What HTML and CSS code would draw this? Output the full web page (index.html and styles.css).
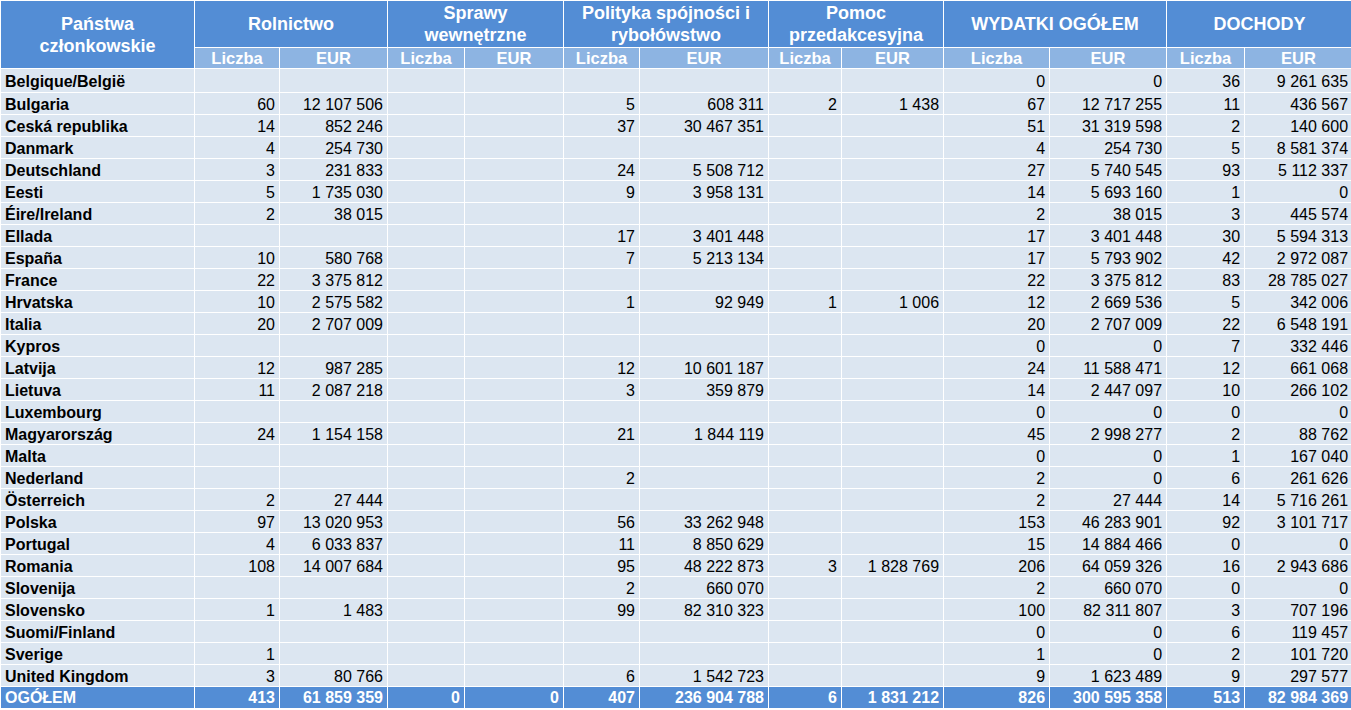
FILE: index.html
```html
<!DOCTYPE html>
<html lang="pl">
<head>
<meta charset="utf-8">
<title>Państwa członkowskie</title>
<link rel="stylesheet" href="styles.css">
</head>
<body>
<table class="grid">
<colgroup>
<col class="c-name"><col class="c1"><col class="c2"><col class="c3"><col class="c4"><col class="c5"><col class="c6"><col class="c7"><col class="c8"><col class="c9"><col class="c10"><col class="c11"><col class="c12">
</colgroup>
<thead>
<tr class="h1">
<th rowspan="2" class="hname">Państwa<br>członkowskie</th>
<th colspan="2">Rolnictwo</th>
<th colspan="2">Sprawy<br>wewnętrzne</th>
<th colspan="2">Polityka spójności i<br>rybołówstwo</th>
<th colspan="2">Pomoc<br>przedakcesyjna</th>
<th colspan="2">WYDATKI OGÓŁEM</th>
<th colspan="2">DOCHODY</th>
</tr>
<tr class="h2">
<th>Liczba</th><th>EUR</th><th>Liczba</th><th>EUR</th><th>Liczba</th><th>EUR</th><th>Liczba</th><th>EUR</th><th>Liczba</th><th>EUR</th><th>Liczba</th><th>EUR</th>
</tr>
</thead>
<tbody>
<tr class="first"><td>Belgique/België</td><td></td><td></td><td></td><td></td><td></td><td></td><td></td><td></td><td>0</td><td>0</td><td>36</td><td>9 261 635</td></tr>
<tr><td>Bulgaria</td><td>60</td><td>12 107 506</td><td></td><td></td><td>5</td><td>608 311</td><td>2</td><td>1 438</td><td>67</td><td>12 717 255</td><td>11</td><td>436 567</td></tr>
<tr><td>Ceská republika</td><td>14</td><td>852 246</td><td></td><td></td><td>37</td><td>30 467 351</td><td></td><td></td><td>51</td><td>31 319 598</td><td>2</td><td>140 600</td></tr>
<tr><td>Danmark</td><td>4</td><td>254 730</td><td></td><td></td><td></td><td></td><td></td><td></td><td>4</td><td>254 730</td><td>5</td><td>8 581 374</td></tr>
<tr><td>Deutschland</td><td>3</td><td>231 833</td><td></td><td></td><td>24</td><td>5 508 712</td><td></td><td></td><td>27</td><td>5 740 545</td><td>93</td><td>5 112 337</td></tr>
<tr><td>Eesti</td><td>5</td><td>1 735 030</td><td></td><td></td><td>9</td><td>3 958 131</td><td></td><td></td><td>14</td><td>5 693 160</td><td>1</td><td>0</td></tr>
<tr><td>Éire/Ireland</td><td>2</td><td>38 015</td><td></td><td></td><td></td><td></td><td></td><td></td><td>2</td><td>38 015</td><td>3</td><td>445 574</td></tr>
<tr><td>Ellada</td><td></td><td></td><td></td><td></td><td>17</td><td>3 401 448</td><td></td><td></td><td>17</td><td>3 401 448</td><td>30</td><td>5 594 313</td></tr>
<tr><td>España</td><td>10</td><td>580 768</td><td></td><td></td><td>7</td><td>5 213 134</td><td></td><td></td><td>17</td><td>5 793 902</td><td>42</td><td>2 972 087</td></tr>
<tr><td>France</td><td>22</td><td>3 375 812</td><td></td><td></td><td></td><td></td><td></td><td></td><td>22</td><td>3 375 812</td><td>83</td><td>28 785 027</td></tr>
<tr><td>Hrvatska</td><td>10</td><td>2 575 582</td><td></td><td></td><td>1</td><td>92 949</td><td>1</td><td>1 006</td><td>12</td><td>2 669 536</td><td>5</td><td>342 006</td></tr>
<tr><td>Italia</td><td>20</td><td>2 707 009</td><td></td><td></td><td></td><td></td><td></td><td></td><td>20</td><td>2 707 009</td><td>22</td><td>6 548 191</td></tr>
<tr><td>Kypros</td><td></td><td></td><td></td><td></td><td></td><td></td><td></td><td></td><td>0</td><td>0</td><td>7</td><td>332 446</td></tr>
<tr><td>Latvija</td><td>12</td><td>987 285</td><td></td><td></td><td>12</td><td>10 601 187</td><td></td><td></td><td>24</td><td>11 588 471</td><td>12</td><td>661 068</td></tr>
<tr><td>Lietuva</td><td>11</td><td>2 087 218</td><td></td><td></td><td>3</td><td>359 879</td><td></td><td></td><td>14</td><td>2 447 097</td><td>10</td><td>266 102</td></tr>
<tr><td>Luxembourg</td><td></td><td></td><td></td><td></td><td></td><td></td><td></td><td></td><td>0</td><td>0</td><td>0</td><td>0</td></tr>
<tr><td>Magyarország</td><td>24</td><td>1 154 158</td><td></td><td></td><td>21</td><td>1 844 119</td><td></td><td></td><td>45</td><td>2 998 277</td><td>2</td><td>88 762</td></tr>
<tr><td>Malta</td><td></td><td></td><td></td><td></td><td></td><td></td><td></td><td></td><td>0</td><td>0</td><td>1</td><td>167 040</td></tr>
<tr><td>Nederland</td><td></td><td></td><td></td><td></td><td>2</td><td></td><td></td><td></td><td>2</td><td>0</td><td>6</td><td>261 626</td></tr>
<tr><td>Österreich</td><td>2</td><td>27 444</td><td></td><td></td><td></td><td></td><td></td><td></td><td>2</td><td>27 444</td><td>14</td><td>5 716 261</td></tr>
<tr><td>Polska</td><td>97</td><td>13 020 953</td><td></td><td></td><td>56</td><td>33 262 948</td><td></td><td></td><td>153</td><td>46 283 901</td><td>92</td><td>3 101 717</td></tr>
<tr><td>Portugal</td><td>4</td><td>6 033 837</td><td></td><td></td><td>11</td><td>8 850 629</td><td></td><td></td><td>15</td><td>14 884 466</td><td>0</td><td>0</td></tr>
<tr><td>Romania</td><td>108</td><td>14 007 684</td><td></td><td></td><td>95</td><td>48 222 873</td><td>3</td><td>1 828 769</td><td>206</td><td>64 059 326</td><td>16</td><td>2 943 686</td></tr>
<tr><td>Slovenija</td><td></td><td></td><td></td><td></td><td>2</td><td>660 070</td><td></td><td></td><td>2</td><td>660 070</td><td>0</td><td>0</td></tr>
<tr><td>Slovensko</td><td>1</td><td>1 483</td><td></td><td></td><td>99</td><td>82 310 323</td><td></td><td></td><td>100</td><td>82 311 807</td><td>3</td><td>707 196</td></tr>
<tr><td>Suomi/Finland</td><td></td><td></td><td></td><td></td><td></td><td></td><td></td><td></td><td>0</td><td>0</td><td>6</td><td>119 457</td></tr>
<tr><td>Sverige</td><td>1</td><td></td><td></td><td></td><td></td><td></td><td></td><td></td><td>1</td><td>0</td><td>2</td><td>101 720</td></tr>
<tr><td>United Kingdom</td><td>3</td><td>80 766</td><td></td><td></td><td>6</td><td>1 542 723</td><td></td><td></td><td>9</td><td>1 623 489</td><td>9</td><td>297 577</td></tr>
</tbody>
<tfoot>
<tr><td>OGÓŁEM</td><td>413</td><td>61 859 359</td><td>0</td><td>0</td><td>407</td><td>236 904 788</td><td>6</td><td>1 831 212</td><td>826</td><td>300 595 358</td><td>513</td><td>82 984 369</td></tr>
</tfoot>
</table>
</body>
</html>
```
FILE: styles.css
```css
html, body {
  margin: 0;
  padding: 0;
  background: #ffffff;
  overflow: hidden;
}
body {
  font-family: "Liberation Sans", Arial, sans-serif;
  font-size: 16px;
  color: #000;
}
.grid {
  border-collapse: collapse;
  table-layout: fixed;
  width: 1352px;
}
.c-name { width: 194px; }
.c1 { width: 85px; }
.c2 { width: 108px; }
.c3 { width: 77px; }
.c4 { width: 99px; }
.c5 { width: 76px; }
.c6 { width: 129px; }
.c7 { width: 73px; }
.c8 { width: 102px; }
.c9 { width: 106px; }
.c10 { width: 117px; }
.c11 { width: 78px; }
.c12 { width: 108px; }
.grid th, .grid td {
  border: 1px solid #ffffff;
  padding: 0 4px;
  white-space: nowrap;
  overflow: hidden;
  line-height: 18px;
}
.grid th {
  color: #ffffff;
  font-weight: bold;
  text-align: center;
}
.h1 { height: 47px; }
.h1 th {
  background: #538dd5;
  font-size: 18px;
  line-height: 22px;
}
.h2 { height: 21px; }
.h2 th {
  background: #8db4e2;
  font-size: 16.5px;
}
.grid tbody tr { height: 22px; }
.grid tbody tr.first { height: 24px; }
.grid tbody td {
  background: #dce6f1;
  text-align: right;
  padding-top: 2px;
}
.grid tbody tr.first td {
  padding-top: 3px;
}
.grid tbody td:first-child {
  text-align: left;
  font-weight: bold;
}
.grid tfoot tr { height: 22px; }
.grid tfoot td {
  background: #538dd5;
  color: #ffffff;
  font-weight: bold;
  text-align: right;
}
.grid tfoot td:first-child {
  text-align: left;
}
```
